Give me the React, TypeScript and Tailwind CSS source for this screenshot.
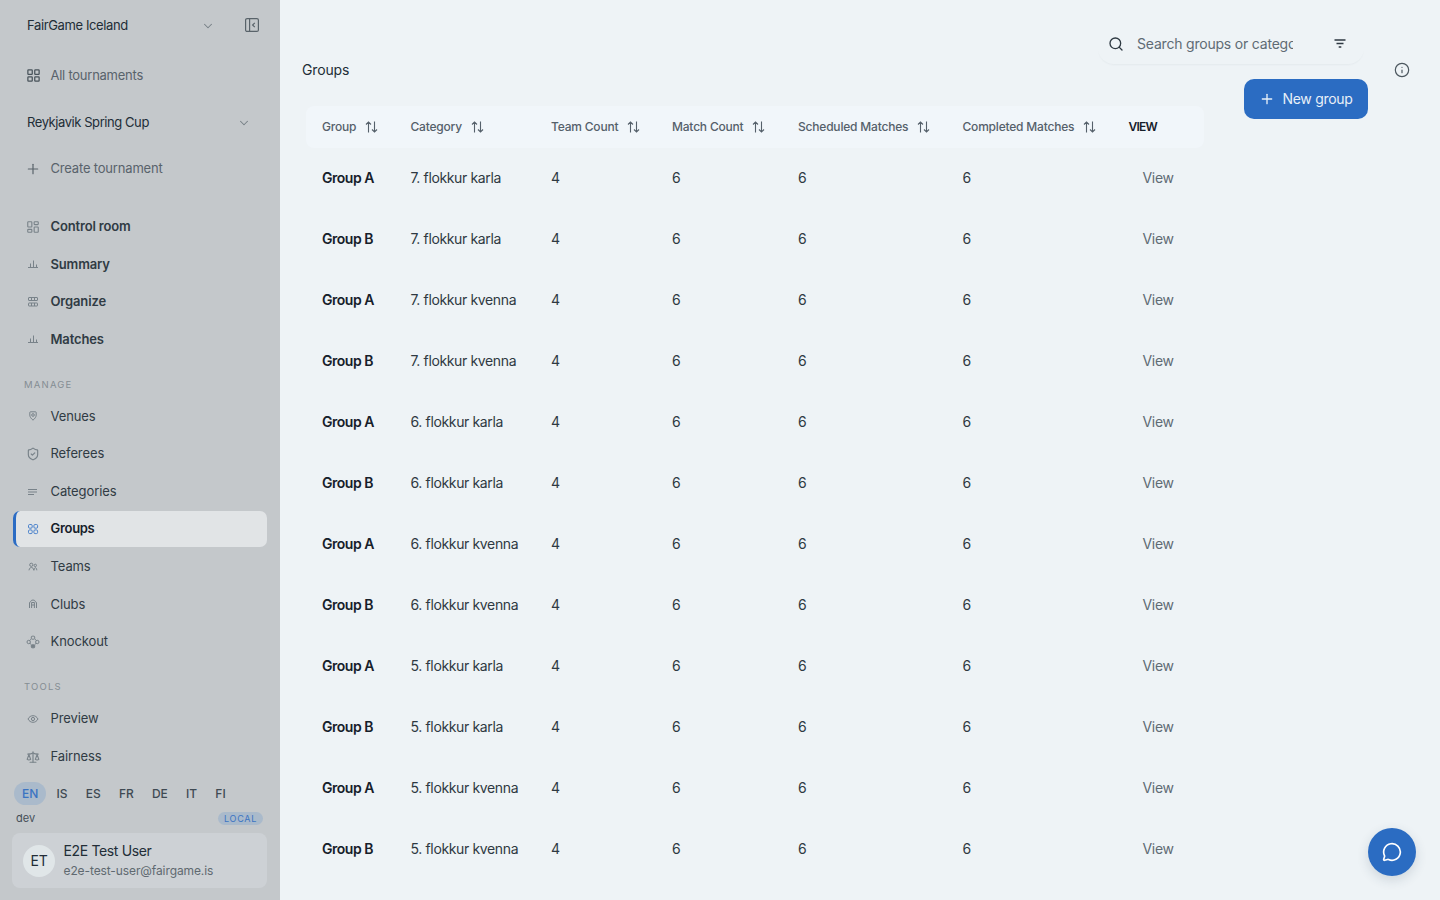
import type { ReactNode } from "react";
import {
  ChevronDown,
  Info,
  LayoutGrid,
  MessageCircle,
  Plus,
  Scale,
  Search,
  ShieldCheck,
  LayoutDashboard,
} from "lucide-react";

interface NavItem {
  label: string;
  icon: ReactNode;
}

interface Group {
  name: string;
  category: string;
}

// Small outline glyphs used by the sidebar, all drawn on a 14px grid
function Glyph({ children }: { children: ReactNode }) {
  return (
    <svg width="14" height="14" viewBox="0 0 14 14" fill="none" stroke="currentColor" strokeWidth="1">
      {children}
    </svg>
  );
}

const BarsIcon = () => (
  <Glyph>
    <path d="M2 10.500h10M4.500 10V6.500M7.500 10V3.500M10.500 10V7.500" />
  </Glyph>
);

const OrganizeIcon = () => (
  <Glyph>
    <rect x="2.500" y="2.500" width="9" height="3" rx="0.500" />
    <rect x="2.500" y="8" width="9" height="3" rx="0.500" />
    <path d="M5.500 2.500v3M8.500 2.500v3M5.500 8v3M8.500 8v3" />
  </Glyph>
);

const PinIcon = () => (
  <Glyph>
    <path d="M7 11.200C4.900 9.400 3.800 7.800 3.800 6V3.500Q3.800 2.800 4.500 2.800H9.500Q10.200 2.800 10.200 3.500V6C10.200 7.800 9.100 9.400 7 11.200Z" />
    <circle cx="7" cy="6" r="1.300" />
  </Glyph>
);

const LinesIcon = () => (
  <Glyph>
    <path d="M2 4.500h9M2 7h9M2 9.500h6" />
  </Glyph>
);

const GroupsIcon = () => (
  <Glyph>
    <rect x="2.500" y="2.500" width="3.700" height="3.700" rx="1.200" />
    <rect x="7.900" y="2.500" width="3.700" height="3.700" rx="1.200" />
    <rect x="2.500" y="7.900" width="3.700" height="3.700" rx="1.200" />
    <rect x="7.900" y="7.900" width="3.700" height="3.700" rx="1.200" />
  </Glyph>
);

const TeamsIcon = () => (
  <Glyph>
    <circle cx="5.300" cy="4.800" r="1.600" />
    <circle cx="9.300" cy="5.400" r="1.200" />
    <path d="M3 10.300c.300-1.900 1.200-2.800 2.400-2.800S7.500 8.400 7.800 10.300M8 10.300c.200-1.800.700-2.600 1.400-2.600s1.200.800 1.400 2.600" />
  </Glyph>
);

const ClubsIcon = () => (
  <Glyph>
    <path d="M3.500 11V6Q3.500 5 4.700 4.600Q5 3 7 3T9.300 4.600Q10.500 5 10.500 6v5M5.600 11V5.500h2.800V11M5.600 8h2.800" />
  </Glyph>
);

const KnockoutIcon = () => (
  <Glyph>
    <rect x="5.300" y="1.200" width="3.400" height="3" rx="0.800" />
    <circle cx="2.700" cy="7" r="1.700" />
    <circle cx="11.300" cy="7" r="1.700" />
    <path d="M4.800 4.200 3.800 5.600M9.200 4.200l1 1.400M4 8.400l1.500 1.400M10 8.400 8.500 9.800" />
    <rect x="5.300" y="9.800" width="3.400" height="3" rx="0.800" fill="currentColor" />
  </Glyph>
);

const EyeIcon = () => (
  <Glyph>
    <path d="M2 7c1.200-2.200 2.900-3.300 5-3.300S10.800 4.800 12 7c-1.200 2.200-2.900 3.300-5 3.300S3.200 9.200 2 7Z" />
    <circle cx="7" cy="7" r="1.600" />
  </Glyph>
);

const mainNav: NavItem[] = [
  { label: "Control room", icon: <LayoutDashboard size={14} strokeWidth={1.9} /> },
  { label: "Summary", icon: <BarsIcon /> },
  { label: "Organize", icon: <OrganizeIcon /> },
  { label: "Matches", icon: <BarsIcon /> },
];

const manageNav: NavItem[] = [
  { label: "Venues", icon: <PinIcon /> },
  { label: "Referees", icon: <ShieldCheck size={14} strokeWidth={2} /> },
  { label: "Categories", icon: <LinesIcon /> },
  { label: "Groups", icon: <GroupsIcon /> },
  { label: "Teams", icon: <TeamsIcon /> },
  { label: "Clubs", icon: <ClubsIcon /> },
  { label: "Knockout", icon: <KnockoutIcon /> },
];

const toolsNav: NavItem[] = [
  { label: "Preview", icon: <EyeIcon /> },
  { label: "Fairness", icon: <Scale size={14} strokeWidth={2} /> },
];

const languages = ["EN", "IS", "ES", "FR", "DE", "IT", "FI"];

const columns = ["Group", "Category", "Team Count", "Match Count", "Scheduled Matches", "Completed Matches"];

const groups: Group[] = [
  "7. flokkur karla",
  "7. flokkur kvenna",
  "6. flokkur karla",
  "6. flokkur kvenna",
  "5. flokkur karla",
  "5. flokkur kvenna",
].flatMap((category) => [
  { name: "Group A", category },
  { name: "Group B", category },
]);

const gridCols = "grid grid-cols-[88.5px_140.5px_121px_126px_164.5px_166px_92px]";

function NavList({ items, bold = false }: { items: NavItem[]; bold?: boolean }) {
  return (
    <nav className="flex flex-col gap-[1.6px] px-[13px]">
      {items.map((item) => {
        const active = item.label === "Groups";
        return (
          <a
            key={item.label}
            className={`flex h-9 items-center rounded-[7px] border-l-[3px] pl-[9px] text-[13px] ${
              active
                ? "border-[#2b6cc4] bg-[#e1e4e6] font-semibold tracking-[-0.3px] text-[#16202a]"
                : `border-transparent text-[#303b44] ${bold ? "font-semibold tracking-[-0.15px]" : "tracking-[-0.1px]"}`
            }`}
          >
            <span className={`mr-[9.5px] flex w-4 justify-center ${active ? "text-[#4a82cc]" : "text-[#788289]"}`}>{item.icon}</span>
            {item.label}
          </a>
        );
      })}
    </nav>
  );
}

function SectionLabel({ children }: { children: ReactNode }) {
  return (
    <div className="mt-[17.3px] mb-[3.7px] h-5 pl-6 text-[9.5px] leading-5 tracking-[1.2px] text-[#858d93]">{children}</div>
  );
}

function SortIcon() {
  return (
    <svg width="14" height="14" viewBox="0 0 14 14" fill="none" stroke="currentColor" strokeWidth="1.1">
      <path d="M4.500 12.500V2M2 4.500 4.500 2 7 4.500M10.500 1.500V12M8 9.500 10.500 12 13 9.500" />
    </svg>
  );
}

function FilterIcon() {
  return (
    <svg width="14" height="14" viewBox="0 0 14 14" fill="none" stroke="currentColor" strokeWidth="1.3">
      <path d="M1.500 3h11M3.500 6.500h7M5.700 10h2.600" />
    </svg>
  );
}

function Sidebar() {
  return (
    <aside className="flex h-full w-[280px] shrink-0 flex-col bg-[#c4c8cb] text-[13px] text-[#222d37]">
      <div className="flex h-[51px] items-center pl-[27px]">
        <span className="w-[174px] tracking-[-0.38px]">FairGame Iceland</span>
        <ChevronDown size={14} strokeWidth={1.8} className="text-[#767f86]" />
        <svg className="mb-px ml-[29px] text-[#59636a]" width="16" height="16" viewBox="0 0 16 16" fill="none" stroke="currentColor" strokeWidth="1.2">
          <rect x="1.600" y="1.600" width="12.800" height="12.800" rx="1.500" />
          <path d="M5.600 1.600v12.800M10.800 5.800 8.600 8l2.200 2.200" />
        </svg>
      </div>
      <div className="flex h-[49px] items-center gap-[9.5px] pl-[26px] text-[#59636b]">
        <LayoutGrid size={15} strokeWidth={2} className="text-[#48535b]" />
        <span className="tracking-[-0.25px]">All tournaments</span>
      </div>
      <div className="flex h-[45px] items-center pl-[27px]">
        <span className="w-[210px] tracking-[-0.43px]">Reykjavik Spring Cup</span>
        <ChevronDown size={14} strokeWidth={1.8} className="text-[#767f86]" />
      </div>
      <div className="flex h-[47px] items-center gap-[9.5px] pl-[25px] text-[#59636b]">
        <Plus size={16} strokeWidth={1.8} />
        <span className="tracking-[-0.18px]">Create tournament</span>
      </div>

      <div className="mt-[16.7px]">
        <NavList items={mainNav} bold />
        <SectionLabel>MANAGE</SectionLabel>
        <NavList items={manageNav} />
        <SectionLabel>TOOLS</SectionLabel>
        <NavList items={toolsNav} />
      </div>

      <div className="mt-[7.5px] flex h-[23px] gap-[2.2px] pl-3.5 text-[12px] font-medium text-[#3f4a53]">
        {languages.map((lang) => (
          <span
            key={lang}
            className={`flex items-center rounded-full px-2 ${lang === "EN" ? "bg-[#aabacb] text-[#3b74c2]" : ""}`}
          >
            {lang}
          </span>
        ))}
      </div>
      <div className="mt-[5.5px] flex h-4 items-center justify-between pl-4 pr-[17px]">
        <span className="text-[11px] text-[#444f58]">dev</span>
        <span className="flex h-[13px] items-center rounded-full bg-[#aabacb] px-1.5 text-[9px] tracking-[0.7px] text-[#3b74c2]">LOCAL</span>
      </div>
      <div className="mx-3 mt-[6.5px] flex h-[55px] w-[255px] items-center rounded-lg bg-[#cdd1d5] pl-[11px]">
        <div className="flex size-8 items-center justify-center rounded-full bg-[#e0e6e8] text-[14px] tracking-[-0.3px]">ET</div>
        <div className="ml-[8.5px]">
          <div className="text-[14px] leading-5 tracking-[-0.35px]">E2E Test User</div>
          <div className="text-[12px] leading-5 tracking-[-0.1px] text-[#5f6970]">e2e-test-user@fairgame.is</div>
        </div>
      </div>
    </aside>
  );
}

export default function App() {
  return (
    <div className="flex h-[900px] w-[1440px] overflow-hidden bg-[#eef3f6] font-['Inter',sans-serif]">
      <Sidebar />

      <main className="relative flex-1 pl-[22px] text-[14px]">
        <header className="flex h-[106px]">
          <h1 className="mt-[60px] w-[796px] leading-5 tracking-[-0.15px] text-[#222d37]">Groups</h1>
          <div className="w-[270px]">
            <div className="mt-6 flex h-10 w-[266px] items-center rounded-2xl pl-2.5 text-[#2e3942] shadow-[0_2px_2px_-1px_rgba(30,50,70,0.05)]">
              <Search size={16} strokeWidth={2} />
              <input
                type="text"
                placeholder="Search groups or categories"
                className="mb-0.5 ml-[13px] w-[156px] bg-transparent tracking-[-0.2px] outline-none placeholder:text-[#5f6b74]"
              />
              <span className="ml-[40px]">
                <FilterIcon />
              </span>
            </div>
            <button className="relative z-10 ml-[146px] mt-[15px] flex h-10 w-[124px] items-center rounded-[10px] bg-[#2b6cc2] pl-[15px] text-[#e8f0f8]">
              <Plus size={16} strokeWidth={2} />
              <span className="mb-0.5 ml-[7.5px] whitespace-nowrap tracking-[-0.3px]">New group</span>
            </button>
          </div>
          <Info size={16} strokeWidth={1.8} className="ml-[26px] mt-[62px] text-[#4c575f]" />
        </header>

        <section className="w-[902px]">
          <div className={`${gridCols} ml-1 h-[42px] items-center rounded-lg bg-[#f1f6fa] text-[12px] font-medium tracking-[-0.2px] text-[#55606a]`}>
            {columns.map((column) => (
              <div key={column} className="flex items-center gap-2 whitespace-nowrap pl-4">
                {column}
                <SortIcon />
              </div>
            ))}
            <div className="pl-4 font-semibold tracking-[-0.8px] text-[#16202a]">VIEW</div>
          </div>
          {groups.map((group, index) => (
            <div key={index} className={`${gridCols} ml-1 h-[61px] items-center pb-0.5 text-[#2e3942]`}>
              <div className="pl-4 font-semibold tracking-[-0.47px] text-[#16202a]">{group.name}</div>
              <div className="pl-4 tracking-[-0.36px]">{group.category}</div>
              <div className="pl-4">4</div>
              <div className="pl-4">6</div>
              <div className="pl-4">6</div>
              <div className="pl-4">6</div>
              <div className="pl-[30px] tracking-[-0.3px] text-[#5f6b74]">View</div>
            </div>
          ))}
        </section>

        <button className="absolute right-6 bottom-6 flex size-12 items-center justify-center rounded-full bg-[#2b6cc2] text-white shadow-[0_4px_12px_rgba(40,60,90,0.16)]">
          <MessageCircle size={20} strokeWidth={2} />
        </button>
      </main>
    </div>
  );
}
